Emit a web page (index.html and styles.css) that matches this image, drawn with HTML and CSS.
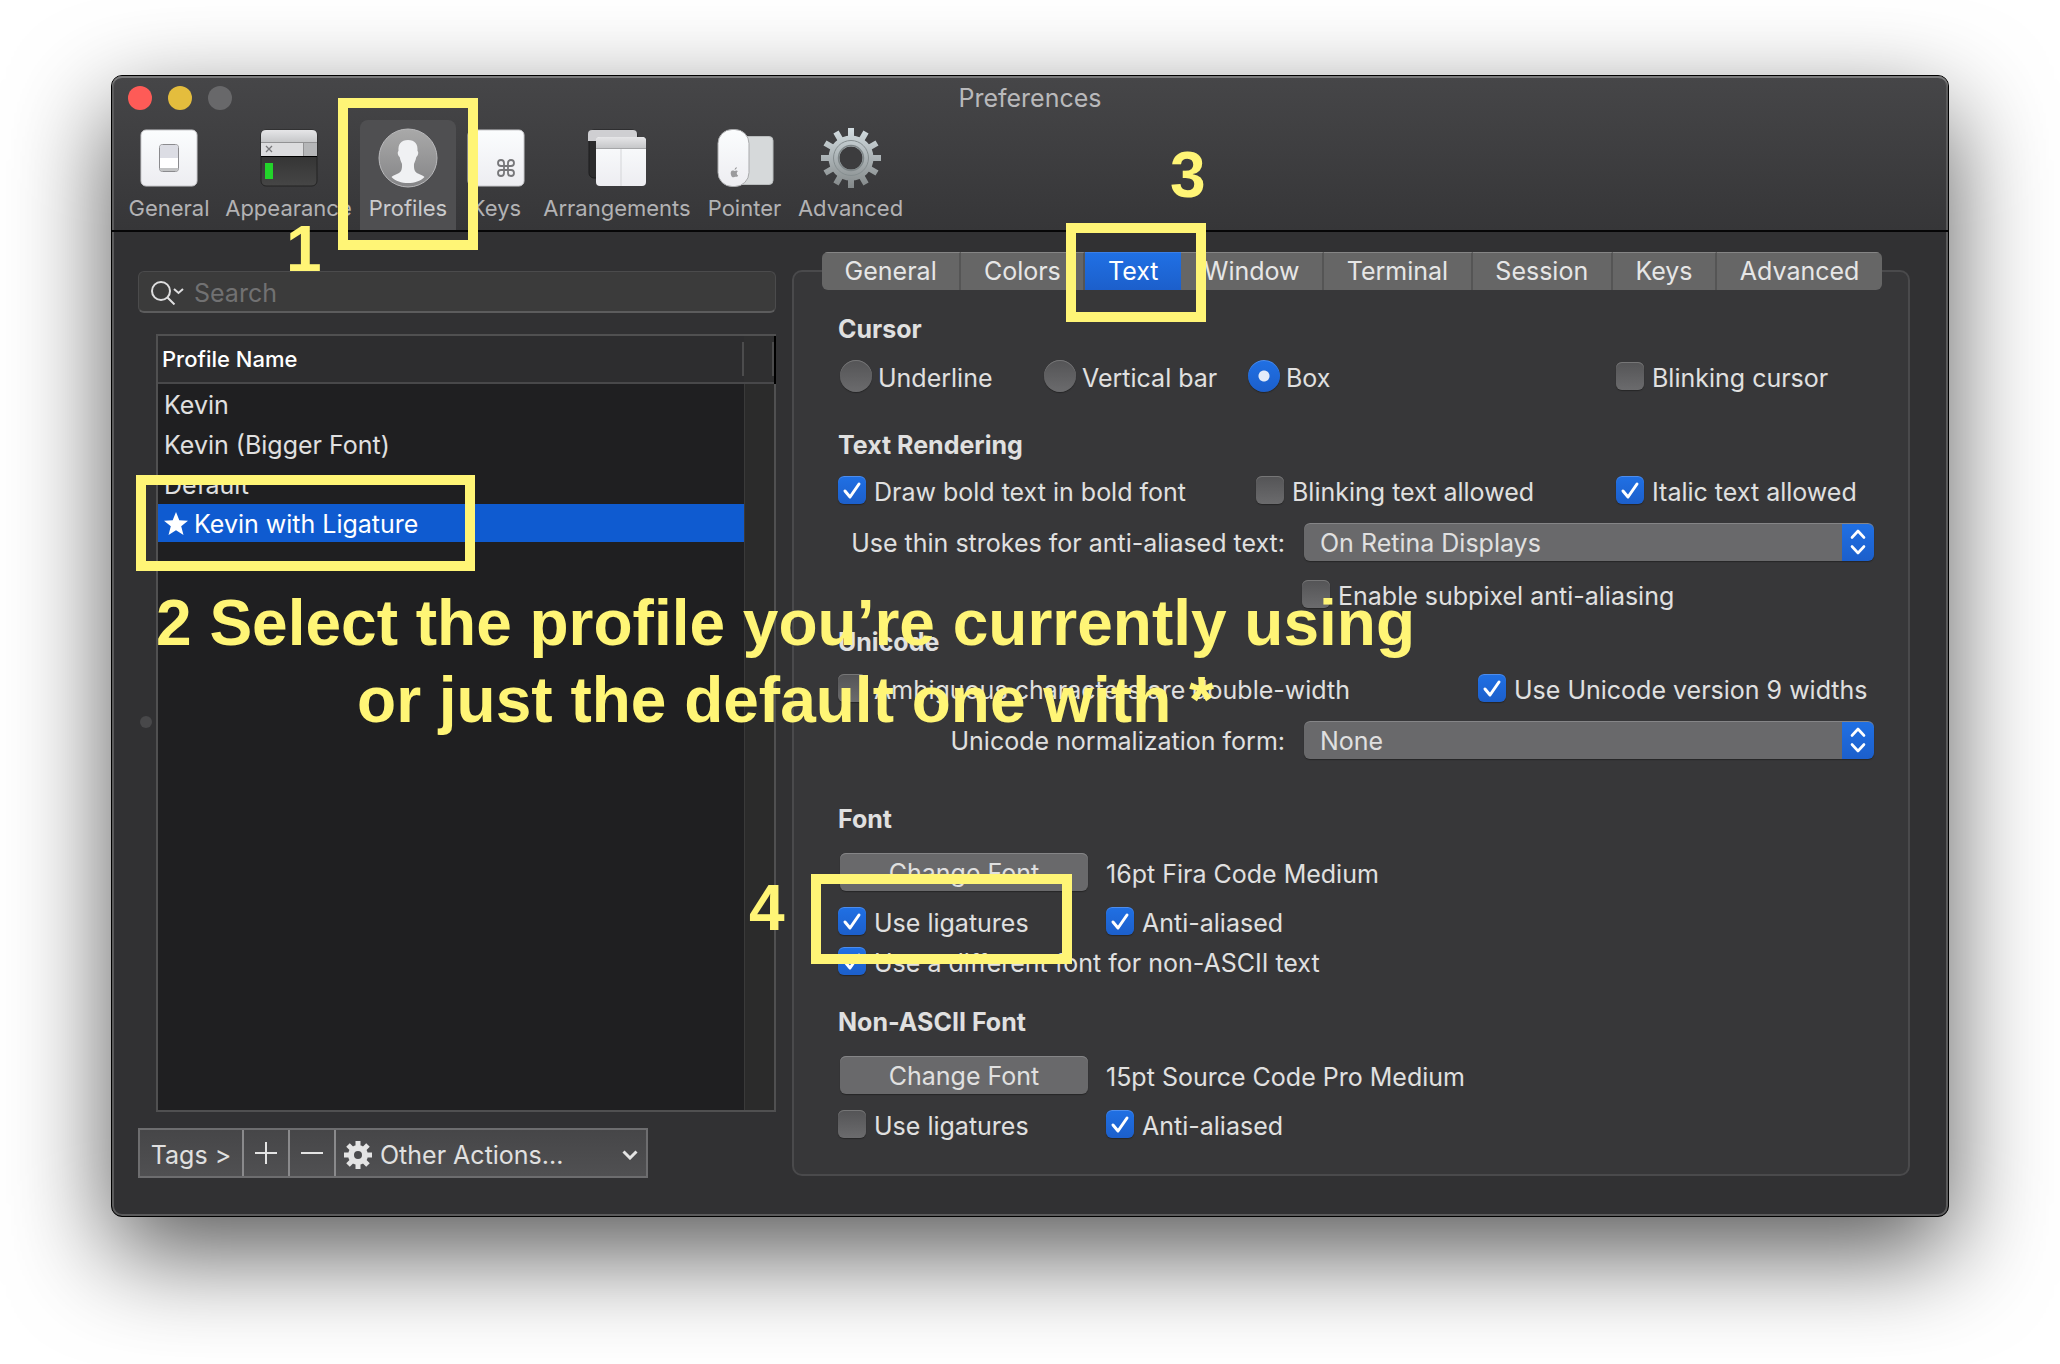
FILE: index.html
```html
<!DOCTYPE html>
<html lang="en">
<head>
<meta charset="utf-8">
<title>Preferences</title>
<link rel="stylesheet" href="styles.css">
</head>
<body>
<main class="window">
  <header class="toolbar">
    <div class="titlebar">
      <div class="lights"><span class="light close"></span><span class="light minimize"></span><span class="light zoom"></span></div>
      <h1 class="title">Preferences</h1>
    </div>
    <nav class="tools">
      <button class="tool" type="button">
        <svg width="60" height="60" viewBox="0 0 60 60" aria-hidden="true">
          <defs>
            <linearGradient id="paper" x1="0" y1="0" x2="0" y2="1"><stop offset="0" stop-color="#fbfdfe"/><stop offset="1" stop-color="#ededf1"/></linearGradient>
            <linearGradient id="silver" x1="0" y1="0" x2="0" y2="1"><stop offset="0" stop-color="#e6e6e8"/><stop offset="1" stop-color="#c6c7c9"/></linearGradient>
            <linearGradient id="screen" x1="0" y1="0" x2="0" y2="1"><stop offset="0" stop-color="#262626"/><stop offset="1" stop-color="#464646"/></linearGradient>
            <linearGradient id="disc" x1="0" y1="0" x2="0" y2="1"><stop offset="0" stop-color="#a9a9a9"/><stop offset="1" stop-color="#858587"/></linearGradient>
            <linearGradient id="metal" gradientUnits="userSpaceOnUse" x1="0" y1="0" x2="0" y2="60"><stop offset="0" stop-color="#d3dde1"/><stop offset="1" stop-color="#838889"/></linearGradient>
          </defs>
          <rect x="2" y="2" width="56" height="56" rx="5" fill="url(#paper)" stroke="#c9c9cc"/>
          <rect x="20.500" y="16.500" width="19" height="27" rx="3" fill="#fff" stroke="#8b8b8e"/>
          <path d="M21 19q0-2 2-2h14q2 0 2 2v11H21z" fill="#dcdde4"/>
          <path d="M21 40h18v1q0 2-2 2H23q-2 0-2-2z" fill="#c2c3c4"/>
        </svg>
        <span>General</span>
      </button>
      <button class="tool" type="button">
        <svg width="60" height="60" viewBox="0 0 60 60" aria-hidden="true">
          <rect x="2" y="2" width="56" height="56" rx="5" fill="url(#screen)" stroke="#232323"/>
          <path d="M2 14V7q0-5 5-5h46q5 0 5 5v7z" fill="url(#silver)"/>
          <rect x="2" y="14" width="56" height="14" fill="#dcdcde"/>
          <rect x="44" y="14" width="14" height="14" fill="#b5b6b8"/>
          <path d="M2 14.500h56M44.500 14v14" stroke="#929294"/>
          <path d="M2 28.500h56" stroke="#000"/>
          <path d="M7 18l6 6M13 18l-6 6" stroke="#77777a" stroke-width="1.300"/>
          <rect x="6" y="35" width="8" height="16" fill="#22d42a"/>
        </svg>
        <span>Appearance</span>
      </button>
      <button class="tool current" type="button">
        <svg width="60" height="60" viewBox="0 0 60 60" aria-hidden="true">
          <circle cx="30" cy="30" r="29" fill="url(#disc)" stroke="#b9b9bb"/>
          <path d="M30 12c-7 0-10 4-9.500 11-1.500 1-.5 5 1.200 6 .7 4 1.800 5 2.300 7 .3 6-1 8-4 9.500-3 1.500-5 2-6.500 3.500 4 4 10 6 16.500 6s12.500-2 16.500-6c-1.500-1.500-3.500-2-6.500-3.500-3-1.500-4.300-3.500-4-9.500.5-2 1.600-3 2.300-7 1.700-1 2.700-5 1.200-6C40 16 37 12 30 12z" fill="#f0f1f3"/>
        </svg>
        <span>Profiles</span>
      </button>
      <button class="tool" type="button">
        <svg width="60" height="60" viewBox="0 0 60 60" aria-hidden="true">
          <rect x="2" y="2" width="56" height="56" rx="5" fill="url(#paper)" stroke="#c9c9cc"/>
          <path d="M38 38v-3a3 3 0 1 0-3 3h10a3 3 0 1 0-3-3v10a3 3 0 1 0 3-3H35a3 3 0 1 0 3 3z" fill="none" stroke="#77777a" stroke-width="1.800"/>
        </svg>
        <span>Keys</span>
      </button>
      <button class="tool" type="button">
        <svg width="60" height="60" viewBox="0 0 60 60" aria-hidden="true">
          <rect x="2" y="2" width="48" height="48" rx="5" fill="#2c2c2d" stroke="#1d1d1e"/>
          <path d="M1 13V6q0-4 4-4h41q4 0 4 4v7z" fill="#cfcfd2"/>
          <rect x="9" y="9" width="50" height="49" rx="4" fill="url(#paper)"/>
          <path d="M9 20v-7q0-4 4-4h42q4 0 4 4v7z" fill="url(#silver)"/>
          <path d="M9 20.500h50" stroke="#a5a6a8"/><path d="M34 21v37" stroke="#d4d5d8"/>
        </svg>
        <span>Arrangements</span>
      </button>
      <button class="tool" type="button">
        <svg width="60" height="60" viewBox="0 0 60 60" aria-hidden="true">
          <rect x="22" y="8.500" width="36" height="48" rx="4" fill="#d6d9da" stroke="#b9bcbd"/>
          <rect x="3" y="1.500" width="31" height="57" rx="14" fill="url(#paper)" stroke="#a9aaac"/>
          <path d="M19.500 43c-3-1.500-4.500 1-3.500 4 1 2.800 2 2.500 3.500 2s2.700.5 3.700-1.500c-2-1-1.700-3.500-.2-4.200-1-1.200-2.200-.8-3.500-.3zM19.500 42q0-2.500 2.500-3-.2 2.500-2.500 3z" fill="#9b9b9d"/>
        </svg>
        <span>Pointer</span>
      </button>
      <button class="tool" type="button">
        <svg width="60" height="60" viewBox="0 0 60 60" aria-hidden="true">
          <g stroke="url(#metal)" stroke-width="6">
            <path d="M30 30L30.010 0M30 30L29.990 60M30 30L0 30.010M30 30L60 29.990M30 30L15 4M30 30L45 56M30 30L4 15M30 30L56 45M30 30L4 45M30 30L56 15M30 30L15 56M30 30L45 4"/>
          </g>
          <circle cx="30" cy="30" r="12" fill="#3c3c3e"/>
          <circle cx="30" cy="30" r="17" fill="none" stroke="url(#metal)" stroke-width="11"/>
          <circle cx="30" cy="30" r="17.500" fill="none" stroke="#868e90"/>
          <circle cx="30" cy="30" r="12.500" fill="none" stroke="#7f8789" stroke-width="1.500"/>
        </svg>
        <span>Advanced</span>
      </button>
    </nav>
  </header>

  <div class="body">
    <section class="sidebar">
      <label class="search">
        <svg width="34" height="24" viewBox="0 0 34 24" fill="none" stroke="#dededf" stroke-width="2" aria-hidden="true"><circle cx="10" cy="10" r="9"/><path d="M16.500 16.500l7 7M23 8l4.500 4L32 8"/></svg>
        <input type="search" placeholder="Search" aria-label="Search">
      </label>
      <div class="list">
        <table class="profiles">
          <thead><tr><th>Profile Name</th><th class="track-head"></th></tr></thead>
          <tbody>
            <tr><td>Kevin</td></tr>
            <tr><td>Kevin (Bigger Font)</td></tr>
            <tr><td>Default</td></tr>
            <tr class="selected"><td><svg width="26" height="26" viewBox="0 0 26 26" aria-hidden="true"><path d="M13 1l3.300 8.300 8.700.5-6.800 5.500 2.300 8.700L13 19.200 5.500 24l2.300-8.700L1 9.800l8.700-.5z" fill="#fff"/></svg>Kevin with Ligature</td></tr>
          </tbody>
        </table>
      </div>
      <div class="actions">
        <button type="button" class="tags">Tags &gt;</button>
        <button type="button" class="small" aria-label="Add"><svg width="22" height="22" viewBox="0 0 22 22" stroke="#e4e4e4" stroke-width="2" aria-hidden="true"><path d="M0 11h22M11 0v22"/></svg></button>
        <button type="button" class="small" aria-label="Remove"><svg width="22" height="22" viewBox="0 0 22 22" stroke="#e4e4e4" stroke-width="2" aria-hidden="true"><path d="M0 11h22"/></svg></button>
        <button type="button" class="other">
          <svg width="28" height="28" viewBox="0 0 28 28" fill="none" stroke="#e4e4e4" aria-hidden="true"><circle cx="14" cy="14" r="7" stroke-width="6"/><path d="M14 0v6M14 22v6M0 14h6M22 14h6M4 4l4.500 4.500M19.500 19.500L24 24M4 24l4.500-4.500M19.500 8.500L24 4" stroke-width="5"/></svg>
          <span>Other Actions...</span>
          <svg class="chevron" width="16" height="10" viewBox="0 0 16 10" fill="none" stroke="#e4e4e4" stroke-width="3" aria-hidden="true"><path d="M1.500 1.500L8 8l6.500-6.500"/></svg>
        </button>
      </div>
      <span class="grip"></span>
    </section>

    <section class="panel">
      <div class="tabs">
        <button type="button">General</button><button type="button">Colors</button><button type="button" class="active">Text</button><button type="button">Window</button><button type="button">Terminal</button><button type="button">Session</button><button type="button">Keys</button><button type="button">Advanced</button>
      </div>

      <h2 class="first">Cursor</h2>
      <div class="row cursor-row">
        <label class="check radio"><input type="radio" name="cursor"><span>Underline</span></label>
        <label class="check radio"><input type="radio" name="cursor"><span>Vertical bar</span></label>
        <label class="check radio"><input type="radio" name="cursor" checked><span>Box</span></label>
        <label class="check"><input type="checkbox"><span>Blinking cursor</span></label>
      </div>

      <h2 class="rendering">Text Rendering</h2>
      <div class="row three">
        <label class="check"><input type="checkbox" checked><span>Draw bold text in bold font</span></label>
        <label class="check"><input type="checkbox"><span>Blinking text allowed</span></label>
        <label class="check"><input type="checkbox" checked><span>Italic text allowed</span></label>
      </div>
      <div class="row field">
        <label for="strokes">Use thin strokes for anti-aliased text:</label>
        <select id="strokes"><option>On Retina Displays</option></select>
      </div>
      <div class="row field subpixel">
        <label class="check"><input type="checkbox"><span>Enable subpixel anti-aliasing</span></label>
      </div>

      <h2 class="unicode">Unicode</h2>
      <div class="row spread">
        <label class="check"><input type="checkbox"><span>Ambiguous characters are double-width</span></label>
        <label class="check"><input type="checkbox" checked><span>Use Unicode version 9 widths</span></label>
      </div>
      <div class="row field">
        <label for="normal">Unicode normalization form:</label>
        <select id="normal"><option>None</option></select>
      </div>

      <h2 class="font">Font</h2>
      <div class="row pair change"><button type="button" class="push">Change Font</button><span class="face">16pt Fira Code Medium</span></div>
      <div class="row pair">
        <label class="check"><input type="checkbox" checked><span>Use ligatures</span></label>
        <label class="check"><input type="checkbox" checked><span>Anti-aliased</span></label>
      </div>
      <div class="row tight"><label class="check"><input type="checkbox" checked><span>Use a different font for non-ASCII text</span></label></div>

      <h2 class="nonascii">Non-ASCII Font</h2>
      <div class="row pair change"><button type="button" class="push">Change Font</button><span class="face">15pt Source Code Pro Medium</span></div>
      <div class="row pair">
        <label class="check"><input type="checkbox"><span>Use ligatures</span></label>
        <label class="check"><input type="checkbox" checked><span>Anti-aliased</span></label>
      </div>
    </section>
  </div>

  <div class="notes">
    <div class="frame frame-profiles"></div>
    <div class="frame frame-row"></div>
    <div class="frame frame-text"></div>
    <div class="frame frame-ligatures"></div>
    <p class="note note-1">1</p>
    <p class="note note-2">2 Select the profile you’re currently using<br>or just the default one with *</p>
    <p class="note note-3">3</p>
    <p class="note note-4">4</p>
  </div>
</main>
</body>
</html>
```
FILE: styles.css
```css
* { box-sizing: border-box; }

body {
  margin: 0;
  padding: 75px 111px 147px;
  background: #fff;
  color: #e0e0e0;
  font-family: Inter, "Liberation Sans", sans-serif;
  font-size: 25px;
  line-height: 30px;
  font-optical-sizing: none;
}

button, input, select { font: inherit; color: inherit; margin: 0; padding: 0; border: 0; background: none; }
h1, h2, p { margin: 0; }
svg { display: block; flex: none; }

.window {
  position: relative;
  border: 1px solid #000;
  border-radius: 11px;
  background: #313133;
  box-shadow: inset 0 0 0 2px #5b5b5c, 0 36px 100px rgba(0, 0, 0, .66);
}

/* title bar and toolbar */
.toolbar {
  height: 156px;
  border-bottom: 2px solid #060607;
  border-radius: 10px 10px 0 0;
  background: linear-gradient(#464648, #363638);
  box-shadow: inset 0 2px 0 #7b7b7c, inset 2px 0 0 #5b5b5c, inset -2px 0 0 #5b5b5c;
}
.titlebar {
  display: grid;
  grid-template-columns: 1fr auto 1fr;
  align-items: center;
  height: 44px;
  padding: 0 16px;
}
.lights { display: flex; gap: 16px; }
.light { width: 24px; height: 24px; border-radius: 50%; }
.close { background: #fe5b57; }
.minimize { background: #e4bd3d; }
.zoom { background: #68686a; }
.title { font-size: 25px; font-weight: 400; color: #b9b9bb; }

.tools {
  display: grid;
  grid-template-columns: 96px 143px 96px 80px 162px 93px 119px;
  padding-left: 9px;
}
.tool {
  display: flex;
  flex-direction: column;
  align-items: center;
  gap: 5px;
  height: 110px;
  padding-top: 8px;
  color: #b2b2b4;
  font-size: 22px;
  font-optical-sizing: auto;
  white-space: nowrap;
}
.tool.current { background: #4f4f51; border-radius: 8px 8px 0 0; color: #cbcbcd; }

/* columns */
.body {
  display: grid;
  grid-template-columns: minmax(0, 638fr) minmax(0, 1118fr);
  gap: 16px;
  padding: 38px 38px 38px 26px;
}

/* profile list */
.sidebar { position: relative; display: flex; flex-direction: column; }
.search {
  display: flex;
  align-items: center;
  gap: 9px;
  height: 42px;
  margin-top: 1px;
  padding: 2px 12px 0;
  border: 1px solid #4b4b4c;
  border-bottom: 2px solid #5c5c5d;
  border-radius: 6px;
  background: #3b3b3b;
}
.search input { flex: 1; min-width: 0; outline: 0; appearance: none; font-optical-sizing: auto; }
.search input::placeholder { color: #717172; opacity: 1; }
.list {
  flex: 1;
  margin: 21px 0 16px 18px;
  border: 2px solid #505051;
  background: linear-gradient(90deg, transparent calc(100% - 30px), #3a3a3a calc(100% - 30px), #3a3a3a calc(100% - 29px), #2b2b2b calc(100% - 29px)), #1f1f21;
}
.profiles { width: 100%; border-collapse: separate; border-spacing: 0; }
.profiles th {
  height: 48px;
  padding: 0 4px;
  border-bottom: 2px solid #48484a;
  background: linear-gradient(#4c4c4d, #4c4c4d) right center / 2px 34px no-repeat, #2d2d2f;
  color: #fff;
  font-size: 22px;
  font-weight: 500;
  font-optical-sizing: auto;
  text-align: left;
}
.profiles .track-head { width: 30px; box-shadow: 2px 0 0 #000; background-color: #2f2f30; }
.profiles td { height: 40px; padding: 4px 6px 0; border-bottom: 2px solid transparent; background-clip: padding-box; }
.selected td { display: flex; align-items: center; gap: 5px; padding: 2px 5px 0; background-color: #0f5bd0; color: #fff; }
.grip { position: absolute; left: 2px; top: 446px; width: 12px; height: 12px; border-radius: 50%; background: #48484a; }

.actions { display: flex; width: 510px; height: 50px; border: 2px solid #6d6d6f; background: linear-gradient(#464648, #505052); }
.actions button { display: flex; align-items: center; justify-content: center; border-right: 2px solid #8a8a8c; }
.actions .tags { width: 104px; padding-top: 4px; }
.actions .small { width: 46px; }
.actions .other { flex: 1; justify-content: flex-start; gap: 8px; padding: 4px 8px 0; border: 0; }
.chevron { margin-left: auto; }

/* settings panel */
.panel {
  margin-bottom: 2px;
  padding: 0 34px 36px 44px;
  border: 2px solid #4a4a4c;
  border-radius: 10px;
  background: #373739;
}
.tabs { display: flex; height: 38px; margin: -20px -8px 0 -16px; border-radius: 6px; overflow: hidden; background: #666; }
.tabs button { flex: 1 1 auto; padding-bottom: 2px; border-top: 1px solid #858585; border-right: 2px solid #555; color: #e6e6e6; }
.tabs button:last-child { border-right: 0; }
.tabs .active { border-color: #3a7fe8; border-right: 0; background: linear-gradient(#2070e4, #1c5fcb); color: #fff; }

h2 { font-size: 25px; line-height: 30px; font-weight: 700; }
.first { margin-top: 24px; }
.rendering { margin-top: 38px; }
.unicode { margin-top: 19px; }
.font { margin-top: 45px; }
.nonascii { margin-top: 32px; }
.row { display: grid; align-items: center; white-space: nowrap; margin-top: 16px; }
.cursor-row { grid-template-columns: 204px 204px minmax(0, 1fr) 258px; }
.three { grid-template-columns: 418px minmax(0, 1fr) 258px; }
.field { grid-template-columns: 447px minmax(0, 1fr); column-gap: 19px; margin-top: 19px; }
.field > label[for] { text-align: right; padding-top: 2px; }
.subpixel .check { grid-column: 2; margin-left: -2px; }
.spread { grid-template-columns: minmax(0, 1fr) 396px; margin-top: 17px; }
.pair { grid-template-columns: 250px minmax(0, 1fr); column-gap: 18px; }
.change { margin-top: 19px; }
.tight { margin-top: 12px; }

.check { display: flex; align-items: center; gap: 8px; height: 28px; }
.check span { padding-top: 4px; }
.check.radio { height: 32px; gap: 6px; padding-left: 2px; }
.check input {
  appearance: none;
  flex: none;
  width: 28px;
  height: 28px;
  border-radius: 6px;
  background: linear-gradient(#545456, #6b6b6d);
  box-shadow: inset 0 1px 0 #767677, 0 1px 1px #262627;
}
.check input:checked {
  background: url('data:image/svg+xml,<svg xmlns="http://www.w3.org/2000/svg" viewBox="0 0 28 28"><path d="M7 15l5 6L21 8" fill="none" stroke="white" stroke-width="3" stroke-linecap="round" stroke-linejoin="round"/></svg>'), linear-gradient(#2070e4, #1c5fcb);
  box-shadow: inset 0 1px 0 #4d8ded, 0 1px 1px #262627;
}
.check.radio input { width: 32px; height: 32px; border-radius: 50%; }
.check.radio input:checked { background: radial-gradient(circle, #e3ebf9 5px, transparent 6px), linear-gradient(#2070e4, #1c5fcb); }

select {
  appearance: none;
  width: 100%;
  height: 38px;
  padding: 2px 48px 0 16px;
  border-radius: 6px;
  background:
    url('data:image/svg+xml,<svg xmlns="http://www.w3.org/2000/svg" viewBox="0 0 32 38"><path d="M10 14.500L16 8l6 6.500M10 23.500L16 30l6-6.500" fill="none" stroke="white" stroke-width="2.600" stroke-linecap="round" stroke-linejoin="round"/></svg>') right / 32px 38px no-repeat,
    linear-gradient(#2070e4, #1c5fcb) right / 32px 38px no-repeat,
    #69696b;
  box-shadow: inset 0 1px 0 #858587, 0 1px 1px #262627;
}
.push {
  height: 38px;
  margin-left: 2px;
  padding-top: 2px;
  border-radius: 6px;
  background: #69696b;
  box-shadow: inset 0 1px 0 #858587, 0 1px 1px #262627;
}
.face { padding-top: 4px; }

/* tutorial annotations laid over the window */
.notes { position: absolute; inset: 0; pointer-events: none; }
.frame { position: absolute; border: 10px solid #fff576; }
.frame-profiles { left: 226px; top: 22px; width: 140px; height: 152px; }
.frame-row { left: 24px; top: 399px; width: 339px; height: 96px; }
.frame-text { left: 954px; top: 147px; width: 140px; height: 99px; }
.frame-ligatures { left: 699px; top: 798px; width: 261px; height: 90px; }
.note {
  position: absolute;
  color: #fff576;
  font: 700 64px/77px "Liberation Sans", Arial, sans-serif;
  text-align: center;
  white-space: nowrap;
}
.note-1 { left: 174px; top: 135px; }
.note-2 { left: 44px; top: 509px; }
.note-3 { left: 1058px; top: 61px; }
.note-4 { left: 637px; top: 794px; }
```
